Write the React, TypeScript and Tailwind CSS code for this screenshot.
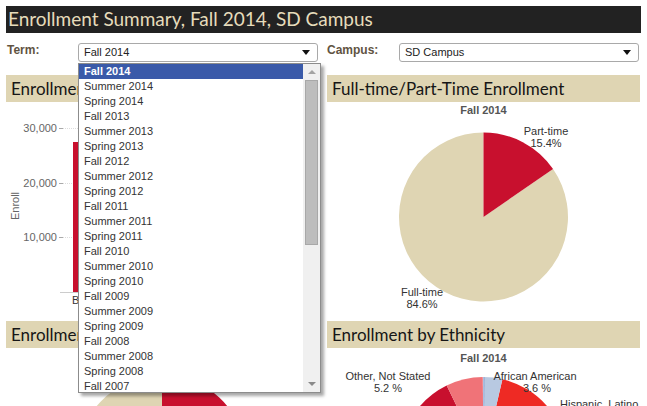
import React from 'react';

const terms = [
  'Fall 2014', 'Summer 2014', 'Spring 2014', 'Fall 2013', 'Summer 2013', 'Spring 2013',
  'Fall 2012', 'Summer 2012', 'Spring 2012', 'Fall 2011', 'Summer 2011', 'Spring 2011',
  'Fall 2010', 'Summer 2010', 'Spring 2010', 'Fall 2009', 'Summer 2009', 'Spring 2009',
  'Fall 2008', 'Summer 2008', 'Spring 2008', 'Fall 2007',
];

const TAN = '#dfd5b3';
const RED = '#c8102e';

// angles in degrees, clockwise from 12 o'clock
const slice = (cx: number, cy: number, r: number, a0: number, a1: number) => {
  const p = (a: number) => {
    const t = (a * Math.PI) / 180;
    return `${(cx + r * Math.sin(t)).toFixed(2)} ${(cy - r * Math.cos(t)).toFixed(2)}`;
  };
  const large = a1 - a0 > 180 ? 1 : 0;
  return `M ${cx} ${cy} L ${p(a0)} A ${r} ${r} 0 ${large} 1 ${p(a1)} Z`;
};

const Arrow = () => (
  <svg width="8" height="5" viewBox="0 0 8 5"><path d="M0 0 H8 L4 5 Z" fill="#111" /></svg>
);

const Select = ({ value, children }: { value: string; children?: React.ReactNode }) => (
  <div className="relative w-[240px]">
    <div className="flex h-[19px] items-center justify-between rounded-[3px] border border-[#a9a9a9] bg-white pl-[5px] pr-[7px] text-[11px] text-[#222]">
      <span>{value}</span>
      <Arrow />
    </div>
    {children}
  </div>
);

const TermList = () => (
  <div className="absolute left-0 top-[20px] z-10 flex h-[330px] w-[243px] overflow-hidden border border-[#8c8c8c] bg-white shadow-[3px_3px_3px_rgba(0,0,0,0.35)]">
    <div className="flex flex-1 flex-col">
      {terms.map((t, i) => (
        <div
          key={t}
          className={
            i === 0
              ? 'h-[15px] shrink-0 bg-[#3a5aa9] pl-[5px] text-[11px] leading-[15px] font-bold text-white'
              : 'h-[15px] shrink-0 pl-[5px] text-[11px] leading-[15px] text-[#333]'
          }
        >
          {t}
        </div>
      ))}
    </div>
    <div className="flex w-[17px] flex-col items-center bg-[#f0f0f0]">
      <div className="flex h-[16px] items-center justify-center">
        <svg width="8" height="4" viewBox="0 0 8 4"><path d="M0 4 L4 0 L8 4 Z" fill="#a3a3a3" /></svg>
      </div>
      <div className="h-[165px] w-[13px] border border-[#a8a8a8] bg-[#bdbdbd]" />
      <div className="flex-1" />
      <div className="flex h-[16px] items-center justify-center">
        <svg width="8" height="4" viewBox="0 0 8 4"><path d="M0 0 H8 L4 4 Z" fill="#8a8a8a" /></svg>
      </div>
    </div>
  </div>
);

const Header = ({ title }: { title: string }) => (
  <div className="flex h-[27px] items-center bg-[#dfd5b3] pl-[5px] font-['Lato',sans-serif] text-[17px] text-[#161616]">
    {title}
  </div>
);

const BarChart = () => (
  <svg width="314" height="219" className="block">
    <g fontFamily="Liberation Sans, Arial, sans-serif" fontSize="11" fill="#666">
      {[
        { y: 26, l: '30,000' },
        { y: 81, l: '20,000' },
        { y: 135, l: '10,000' },
      ].map((t) => (
        <g key={t.l}>
          <text x="51" y={t.y + 4} textAnchor="end">{t.l}</text>
          <line x1="53" x2="57" y1={t.y + 0.5} y2={t.y + 0.5} stroke="#aaa" />
          <line x1="57" x2="200" y1={t.y + 0.5} y2={t.y + 0.5} stroke="#ddd" strokeDasharray="1 1" />
        </g>
      ))}
      <text x="13" y="104" textAnchor="middle" transform="rotate(-90 13 104)">Enroll</text>
    </g>
    <rect x="67" y="40" width="40" height="150" fill={RED} />
    <line x1="54" x2="200" y1="190.5" y2="190.5" stroke="#ccc" />
    <text x="66" y="202" fontFamily="Liberation Sans, Arial, sans-serif" fontSize="11" fill="#333">B</text>
  </svg>
);

const FtPtPie = () => (
  <svg width="313" height="219" className="block">
    <g fontFamily="Liberation Sans, Arial, sans-serif" fontSize="11">
      <text x="156.5" y="12" textAnchor="middle" fontWeight="bold" fill="#555">Fall 2014</text>
      <path d={slice(156.5, 115, 84.5, 55.4, 360)} fill={TAN} />
      <path d={slice(156.5, 115, 84.5, 0, 55.4)} fill={RED} />
      <text x="219" y="33" textAnchor="middle" fill="#333">Part-time</text>
      <text x="219" y="45" textAnchor="middle" fill="#333">15.4%</text>
      <text x="95" y="194" textAnchor="middle" fill="#333">Full-time</text>
      <text x="95" y="206" textAnchor="middle" fill="#333">84.6%</text>
    </g>
  </svg>
);

const GenderPie = () => (
  <svg width="314" height="58" className="block">
    <text x="156" y="14" textAnchor="middle" fontFamily="Liberation Sans, Arial, sans-serif" fontSize="11" fontWeight="bold" fill="#555">Fall 2014</text>
    <path d={slice(156, 111, 84, 172, 360)} fill={TAN} />
    <path d={slice(156, 111, 84, 0, 172)} fill={RED} />
  </svg>
);

const EthnicityPie = () => (
  <svg width="313" height="58" className="block">
    <g fontFamily="Liberation Sans, Arial, sans-serif" fontSize="11">
      <text x="156.5" y="14" textAnchor="middle" fontWeight="bold" fill="#555">Fall 2014</text>
      <path d={slice(156.5, 113, 84, 13, 160)} fill="#ee2a24" />
      <path d={slice(156.5, 113, 84, 160, 310)} fill={TAN} />
      <path d={slice(156.5, 113, 84, 310, 334)} fill={RED} />
      <path d={slice(156.5, 113, 84, 334, 359.5)} fill="#f07378" />
      <path d={slice(156.5, 113, 84, 0.5, 13)} fill="#b8c9e1" />
      <path d={slice(156.5, 113, 84, 0, 0.6)} fill="#5b7fbf" />
      <text x="61" y="32" textAnchor="middle" fill="#333">Other, Not Stated</text>
      <text x="61" y="44" textAnchor="middle" fill="#333">5.2 %</text>
      <text x="208" y="32" textAnchor="middle" fill="#333">African American</text>
      <text x="210" y="44" textAnchor="middle" fill="#333">3.6 %</text>
      <text x="233" y="60" fill="#333">Hispanic, Latino</text>
    </g>
  </svg>
);

export default function App() {
  return (
    <div className="h-[406px] w-[647px] overflow-hidden bg-white pl-[6px] pt-[6px] font-['Liberation_Sans',Arial,sans-serif]">
      <div className="flex h-[27px] w-[635px] items-center bg-[#222222] pl-[2px] font-['Lato',sans-serif] text-[19px] text-[#e6dcbb]">
        Enrollment Summary, Fall 2014, SD Campus
      </div>

      <div className="relative z-10 mt-[10px] flex h-[19px] items-start">
        <div className="w-[72px] pl-[1px] text-[12px] font-bold leading-[14px] text-[#615342]">Term:</div>
        <Select value="Fall 2014">
          <TermList />
        </Select>
        <div className="w-[81px] pl-[9px] text-[12px] font-bold leading-[14px] text-[#615342]">Campus:</div>
        <Select value="SD Campus" />
      </div>

      <div className="mt-[13px] grid w-[634px] grid-cols-[314px_313px] gap-x-[7px]">
        <div>
          <Header title="Enrollment by Level" />
          <BarChart />
        </div>
        <div>
          <Header title="Full-time/Part-Time Enrollment" />
          <FtPtPie />
        </div>
        <div>
          <Header title="Enrollment by Gender" />
          <GenderPie />
        </div>
        <div>
          <Header title="Enrollment by Ethnicity" />
          <EthnicityPie />
        </div>
      </div>
    </div>
  );
}
